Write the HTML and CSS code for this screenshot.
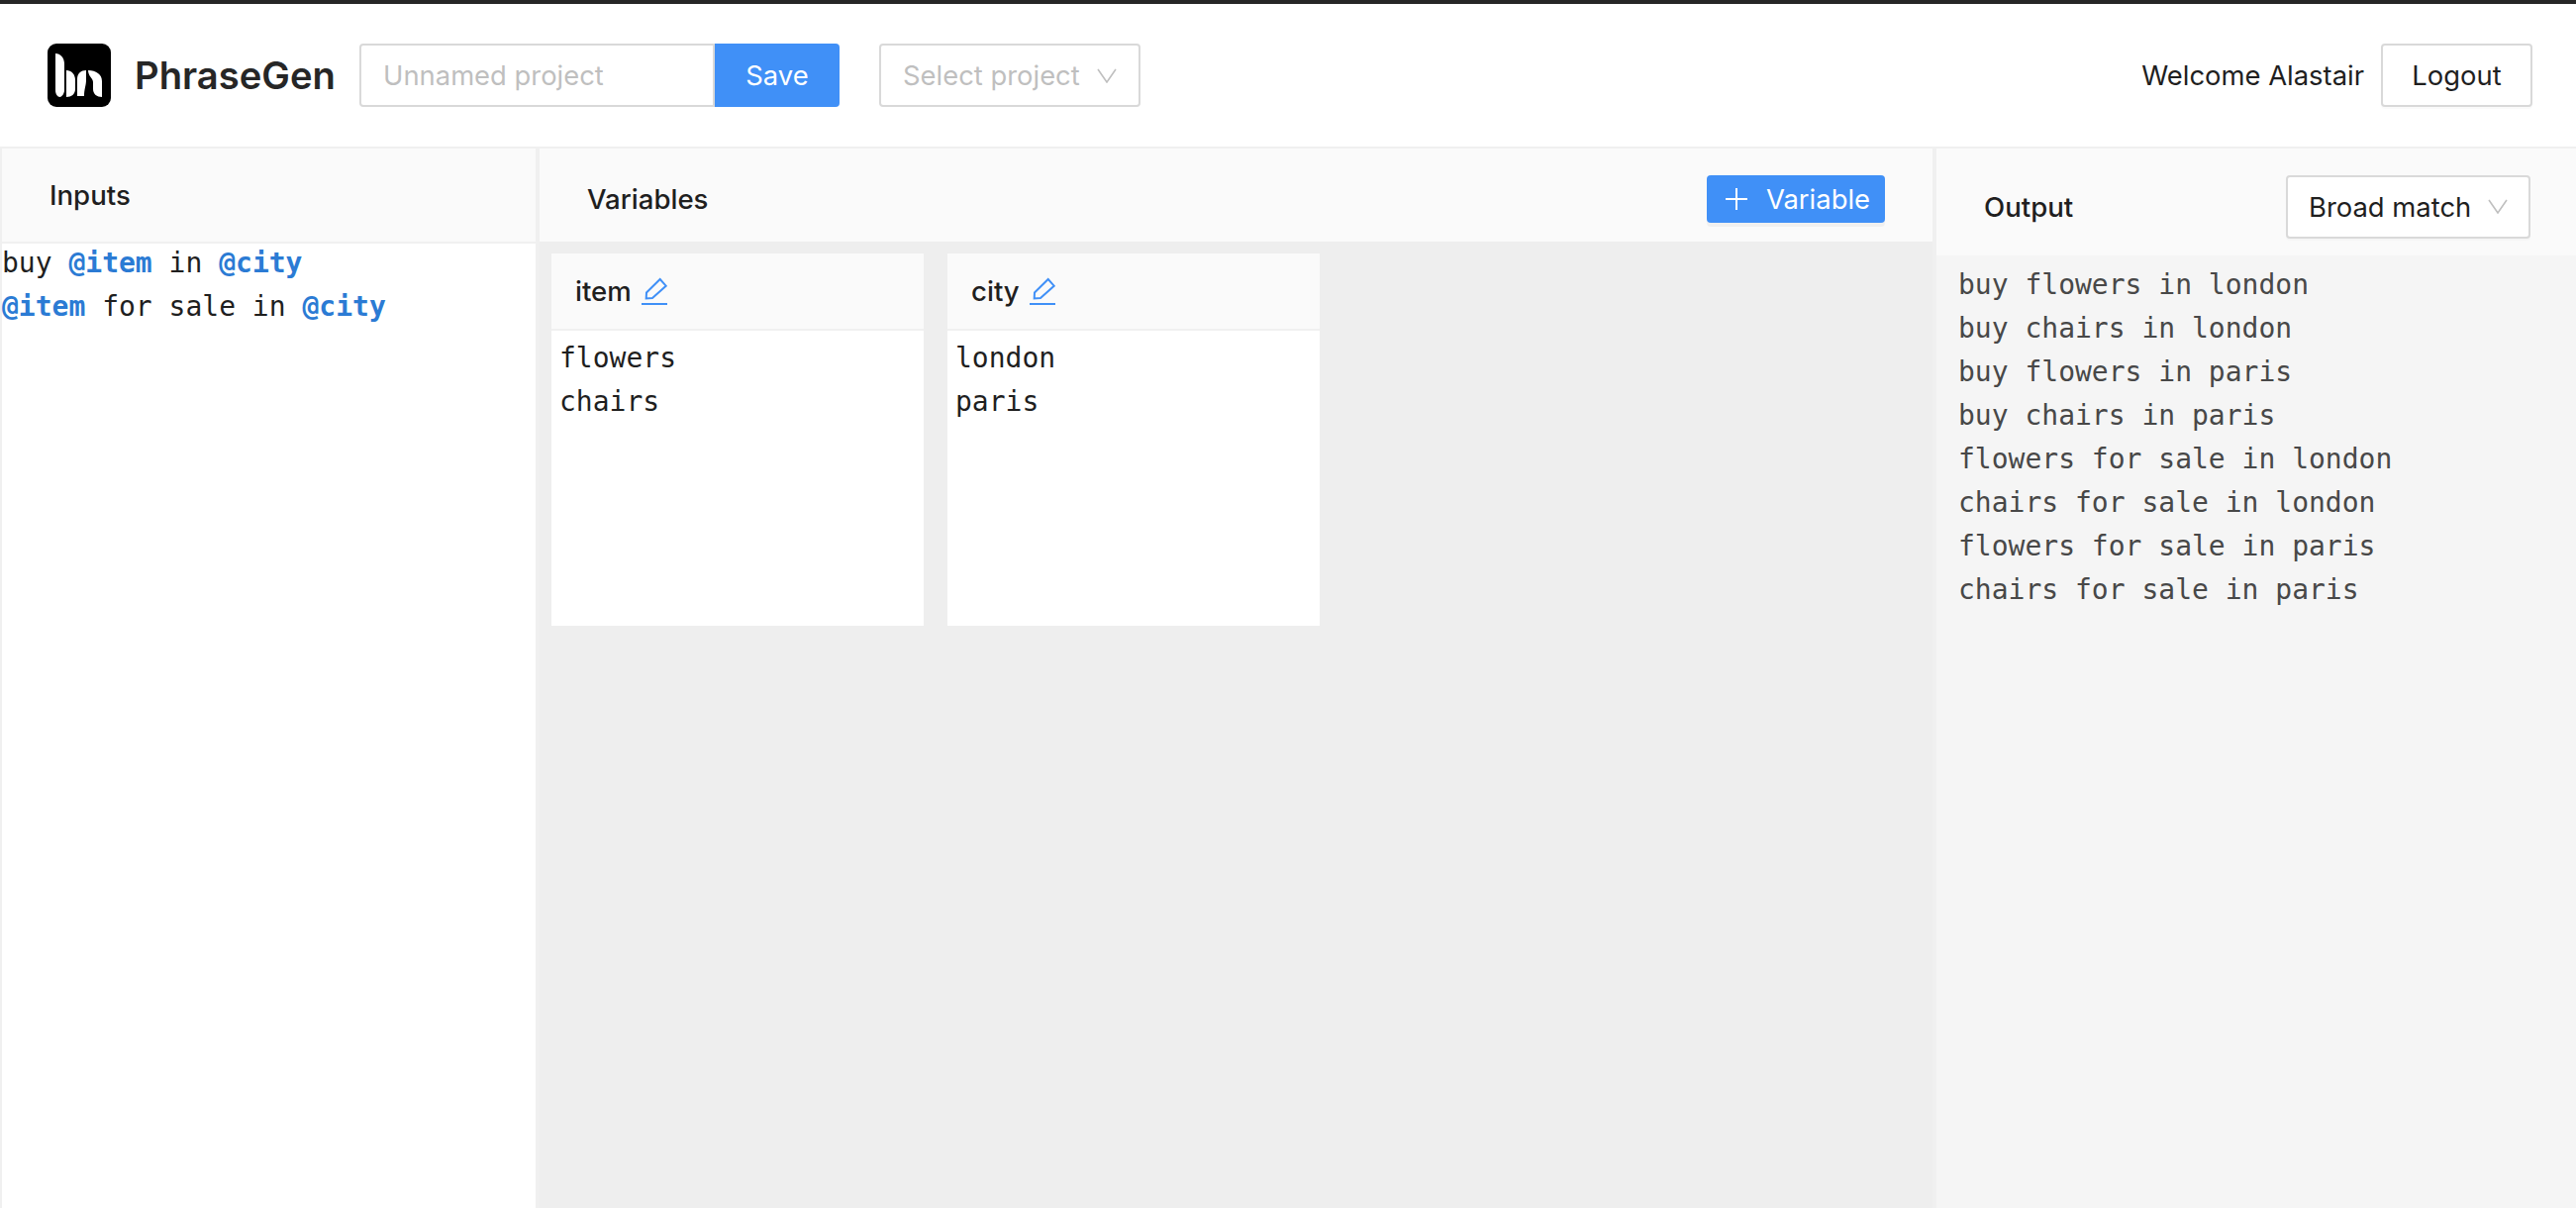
FILE: index.html
```html
<!DOCTYPE html>
<html lang="en">
<head>
    <meta charset="UTF-8">
    <meta name="viewport" content="width=device-width, initial-scale=1.0">
    <title>PhraseGen</title>
    <link rel="stylesheet" href="styles.css">
</head>
<body>
    <header class="topbar">
        <div class="brand">
            <svg class="logo" viewBox="0 0 64 64">
                <rect width="64" height="64" rx="9" fill="#000"/>
                <path d="M8 10 C13 10 17 14 17 21 V47 C17 51 14 54 12.5 54 C10 54 8 51 8 47 Z" fill="#fff"/>
                <path d="M19 27 C24 27 28 31 28 37 V46 C28 51 24 54 19 54 Z" fill="#fff"/>
                <path d="M30 53 V36 C30 30 34 27 39 27 V37 C39 42 37 46 37 53 Z" fill="#fff"/>
                <path d="M41 27 C49 27 55 31 55 38 V54 C50 54 46 51 46 46 V39 C46 35 41 33 41 27 Z" fill="#fff"/>
            </svg>
            <span class="brand-name">PhraseGen</span>
        </div>
        <div class="save-group">
            <input class="project-input" type="text" placeholder="Unnamed project">
            <button class="btn btn-primary btn-save">Save</button>
        </div>
        <div class="select select-muted project-select">
            <span>Select project</span>
            <svg class="chevron" viewBox="0 0 20 15"><path d="M1 1 L10 14 L19 1"/></svg>
        </div>
        <div class="user">
            <span>Welcome Alastair</span>
            <button class="btn btn-logout">Logout</button>
        </div>
    </header>

    <main class="panels">
        <section class="panel panel-inputs">
            <div class="panel-head">Inputs</div>
            <div class="code inputs-code">
                <div>buy <b>@item</b> in <b>@city</b></div>
                <div><b>@item</b> for sale in <b>@city</b></div>
            </div>
        </section>

        <section class="panel panel-variables">
            <div class="panel-head variables-head">
                <span>Variables</span>
                <button class="btn btn-primary btn-variable">
                    <svg class="plus" viewBox="0 0 22 22"><path d="M11 0 V22 M0 11 H22"/></svg>
                    Variable
                </button>
            </div>
            <div class="cards">
                <div class="card">
                    <div class="card-head">item
                        <svg class="edit" viewBox="0 0 26 28"><path d="M18.7 2 L24.7 8.7 L11 21 L4.7 21.5 L5 15.5 Z"/><path d="M0 27 H26"/></svg>
                    </div>
                    <div class="code card-body">
                        <div>flowers</div>
                        <div>chairs</div>
                    </div>
                </div>
                <div class="card">
                    <div class="card-head">city
                        <svg class="edit" viewBox="0 0 26 28"><path d="M18.7 2 L24.7 8.7 L11 21 L4.7 21.5 L5 15.5 Z"/><path d="M0 27 H26"/></svg>
                    </div>
                    <div class="code card-body">
                        <div>london</div>
                        <div>paris</div>
                    </div>
                </div>
            </div>
        </section>

        <section class="panel panel-output">
            <div class="panel-head output-head">
                <span>Output</span>
                <div class="select match-select">
                    <span>Broad match</span>
                    <svg class="chevron" viewBox="0 0 20 15"><path d="M1 1 L10 14 L19 1"/></svg>
                </div>
            </div>
            <div class="code output-code">
                <div>buy flowers in london</div>
                <div>buy chairs in london</div>
                <div>buy flowers in paris</div>
                <div>buy chairs in paris</div>
                <div>flowers for sale in london</div>
                <div>chairs for sale in london</div>
                <div>flowers for sale in paris</div>
                <div>chairs for sale in paris</div>
            </div>
        </section>
    </main>
</body>
</html>
```

FILE: styles.css
```css
* {
    box-sizing: border-box;
}
html, body {
    height: 100%;
}
body {
    margin: 0;
    display: flex;
    flex-direction: column;
    overflow: hidden;
    border-top: 4px solid #262626;
    font-family: Inter, 'Noto Sans', sans-serif;
    font-size: 27.4px;
    color: #1f1f1f;
    background-color: #fff;
}
.topbar {
    display: flex;
    align-items: center;
    flex: none;
    height: 144px;
    padding: 0 44px 0 48px;
}
.brand {
    display: flex;
    align-items: center;
    width: 315px;
}
.logo {
    width: 64px;
    height: 64px;
    margin-right: 24px;
}
.brand-name {
    font-size: 38.2px;
    font-weight: 600;
    color: #262626;
}
.save-group {
    display: flex;
    margin-right: 40px;
}
.project-input {
    width: 359px;
    height: 64px;
    padding: 0 22px;
    border: 2px solid #d9d9d9;
    border-radius: 4px 0 0 4px;
    font-family: inherit;
    font-size: 27.4px;
    outline: none;
}
.project-input::placeholder {
    color: #bfbfbf;
}
.btn {
    height: 64px;
    border-radius: 4px;
    font-family: inherit;
    font-size: 27.4px;
    cursor: pointer;
}
.btn-primary {
    border: none;
    background-color: #4090f7;
    color: #fff;
}
.btn-save {
    width: 126px;
    border-radius: 0 4px 4px 0;
}
.select {
    display: flex;
    align-items: center;
    justify-content: space-between;
    height: 64px;
    padding: 0 22px;
    border: 2px solid #d9d9d9;
    border-radius: 4px;
    background-color: #fff;
}
.select-muted {
    color: #bfbfbf;
}
.project-select {
    width: 264px;
}
.chevron {
    width: 20px;
    height: 15px;
    flex: none;
    fill: none;
    stroke: #bfbfbf;
    stroke-width: 1.6;
}
.user {
    display: flex;
    align-items: center;
    gap: 17px;
    margin-left: auto;
}
.btn-logout {
    width: 153px;
    border: 2px solid #d9d9d9;
    background-color: #fff;
    color: #1f1f1f;
    box-shadow: 0 2px 0 rgba(0, 0, 0, 0.02);
}
.panels {
    display: flex;
    flex: 1;
    min-height: 0;
    gap: 4px;
    padding-top: 2px;
    background-color: #f0f0f0;
}
.panel {
    display: flex;
    flex-direction: column;
}
.panel-inputs {
    width: 539px;
    margin-left: 2px;
    background-color: #fff;
}
.panel-variables {
    flex: 1;
    background-color: #eee;
}
.panel-output {
    width: 646px;
    background-color: #f5f5f5;
}
.panel-head {
    display: flex;
    align-items: center;
    flex: none;
    height: 94px;
    padding: 0 48px;
    background-color: #fafafa;
    font-weight: 500;
    font-size: 27.6px;
}
.variables-head {
    justify-content: space-between;
    padding-top: 8px;
}
.btn-variable {
    display: flex;
    align-items: center;
    gap: 19px;
    height: 48px;
    padding: 0 15px 0 19px;
    font-weight: 400;
    box-shadow: 0 4px 0 rgba(0, 0, 0, 0.04);
}
.plus {
    width: 22px;
    height: 22px;
    fill: none;
    stroke: #fff;
    stroke-width: 2;
}
.output-head {
    justify-content: space-between;
    height: 108px;
    padding-top: 9px;
    padding-right: 46px;
}
.match-select {
    width: 247px;
    padding: 0 21px;
    font-weight: 400;
    font-size: 27.4px;
    box-shadow: 0 2px 0 rgba(0, 0, 0, 0.02);
}
.code {
    font-family: 'DejaVu Sans Mono', monospace;
    font-size: 28px;
    line-height: 44px;
}
.code b {
    color: #2b7bd4;
}
.inputs-code {
    flex: 1;
    border-top: 2px solid #f0f0f0;
}
.inputs-code div:first-child {
    margin-top: -2px;
}
.cards {
    display: flex;
    gap: 24px;
    padding: 12px;
}
.card {
    width: 376px;
    height: 376px;
    background-color: #fff;
}
.card-head {
    display: flex;
    align-items: center;
    gap: 10px;
    height: 78px;
    padding: 0 24px;
    border-bottom: 2px solid #f0f0f0;
    background-color: #fafafa;
    font-weight: 500;
    font-size: 27.6px;
}
.edit {
    width: 26px;
    height: 28px;
    fill: none;
    stroke: #4090f7;
    stroke-width: 2;
}
.card-body {
    padding: 6px 0 0 8px;
}
.output-code {
    padding: 8px 0 0 22px;
    color: #484848;
}
```
